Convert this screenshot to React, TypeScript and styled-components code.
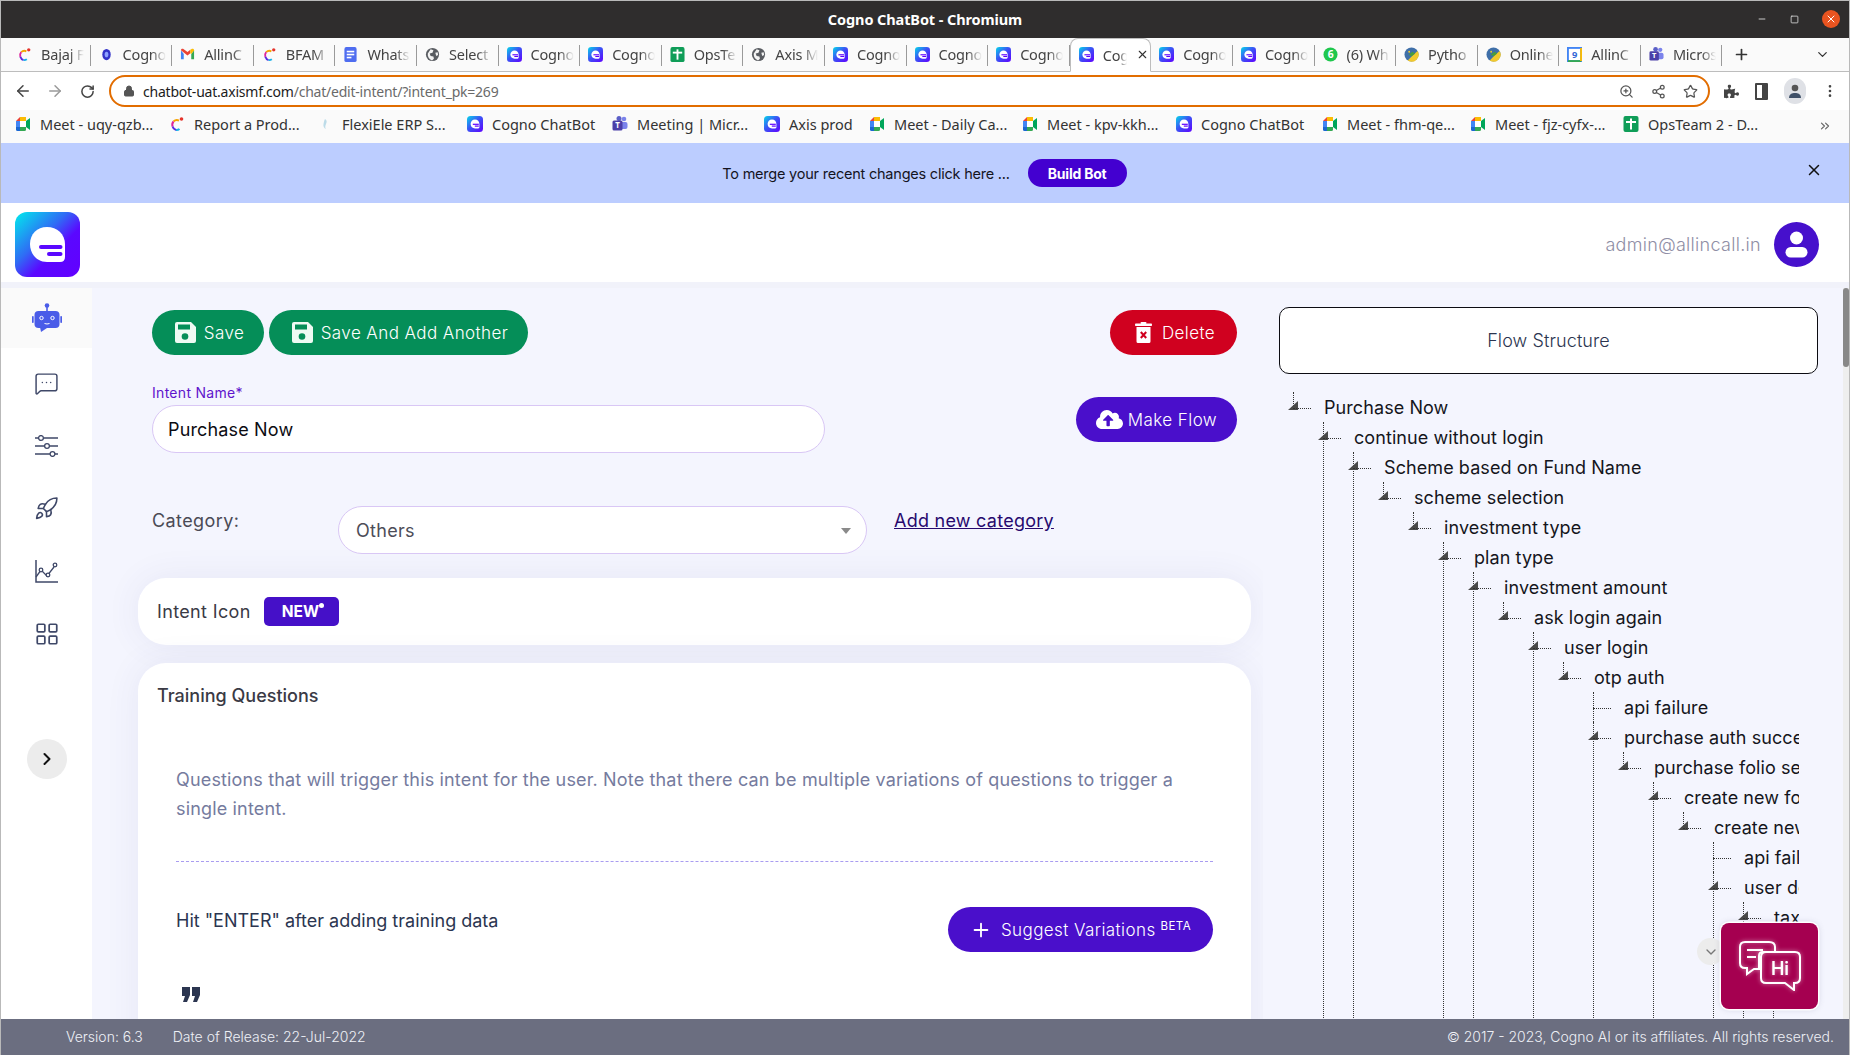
import React, { useId } from "react";
import styled, { createGlobalStyle } from "styled-components";
import {
  ArrowLeft,
  ArrowRight,
  ChevronDown,
  ChevronRight,
  ChevronsRight,
  LayoutGrid,
  Lock,
  MessageSquareMore,
  Minus,
  MoreVertical,
  Plus,
  RotateCw,
  Rocket,
  Share2,
  Square,
  Star,
  X,
  ZoomIn,
} from "lucide-react";
import { FaCloudUploadAlt, FaPuzzlePiece } from "react-icons/fa";

type IconKind =
  | "bajaj"
  | "orb"
  | "gmail"
  | "docs"
  | "globe"
  | "cogno"
  | "sheets"
  | "whatsapp"
  | "python"
  | "calendar"
  | "teams"
  | "meet"
  | "flexi";

type TreeNode = { label: string; open?: boolean; more?: boolean; children?: TreeNode[] };

const TABS: { kind: IconKind; label: string; active?: boolean }[] = [
  { kind: "bajaj", label: "Bajaj F" },
  { kind: "orb", label: "Cogno" },
  { kind: "gmail", label: "AllinC" },
  { kind: "bajaj", label: "BFAM" },
  { kind: "docs", label: "Whats" },
  { kind: "globe", label: "Select" },
  { kind: "cogno", label: "Cogno" },
  { kind: "cogno", label: "Cogno" },
  { kind: "sheets", label: "OpsTe" },
  { kind: "globe", label: "Axis M" },
  { kind: "cogno", label: "Cogno" },
  { kind: "cogno", label: "Cogno" },
  { kind: "cogno", label: "Cogno" },
  { kind: "cogno", label: "Cog", active: true },
  { kind: "cogno", label: "Cogno" },
  { kind: "cogno", label: "Cogno" },
  { kind: "whatsapp", label: "(6) Wh" },
  { kind: "python", label: "Pytho" },
  { kind: "python", label: "Online" },
  { kind: "calendar", label: "AllinC" },
  { kind: "teams", label: "Micros" },
];

const BOOKMARKS: { kind: IconKind; label: string; width: number }[] = [
  { kind: "meet", label: "Meet - uqy-qzb...", width: 154 },
  { kind: "bajaj", label: "Report a Prod...", width: 148 },
  { kind: "flexi", label: "FlexiEle ERP S...", width: 150 },
  { kind: "cogno", label: "Cogno ChatBot", width: 145 },
  { kind: "teams", label: "Meeting | Micr...", width: 152 },
  { kind: "cogno", label: "Axis prod", width: 105 },
  { kind: "meet", label: "Meet - Daily Ca...", width: 153 },
  { kind: "meet", label: "Meet - kpv-kkh...", width: 154 },
  { kind: "cogno", label: "Cogno ChatBot", width: 146 },
  { kind: "meet", label: "Meet - fhm-qe...", width: 148 },
  { kind: "meet", label: "Meet - fjz-cyfx-...", width: 153 },
  { kind: "sheets", label: "OpsTeam 2 - D...", width: 160 },
];

const chain = (nodes: TreeNode[]): TreeNode => {
  const [first, ...rest] = nodes;
  return rest.length ? { ...first, open: true, children: [chain(rest)] } : first;
};

const FLOW: TreeNode = chain([
  { label: "Purchase Now" },
  { label: "continue without login", more: true },
  { label: "Scheme based on Fund Name", more: true },
  { label: "scheme selection" },
  { label: "investment type" },
  { label: "plan type", more: true },
  { label: "investment amount", more: true },
  { label: "ask login again" },
  { label: "user login", more: true },
  {
    label: "otp auth",
    open: true,
    children: [
      { label: "api failure", more: true },
      {
        label: "purchase auth success",
        open: true,
        more: true,
        children: [
          chain([
            { label: "purchase folio selection" },
            { label: "create new folio", more: true },
            { label: "create new folio" },
          ]),
        ],
      },
    ],
  },
]);

// the deepest branch of the chart sits under "create new folio"
const addLeaves = (node: TreeNode): TreeNode => {
  if (node.label === "create new folio" && !node.more) {
    return {
      ...node,
      open: true,
      children: [
        { label: "api failure", more: true },
        {
          label: "user details",
          open: true,
          children: [
            { label: "tax status", open: true, more: true, children: [{ label: "", more: true }] },
          ],
        },
      ],
    };
  }
  return node.children ? { ...node, children: node.children.map(addLeaves) } : node;
};

const GlobalStyle = createGlobalStyle`
  html, body {
    margin: 0;
    padding: 0;
    overflow: hidden;
  }
  * {
    box-sizing: border-box;
  }
  body {
    font-family: Inter, "Open Sans", sans-serif;
  }
`;

const Window = styled.div`
  position: relative;
  width: 1850px;
  height: 1055px;
  display: flex;
  flex-direction: column;
  overflow: hidden;
  background: #fff;
  border-left: 1px solid #b9b9b9;
  border-right: 1px solid #b9b9b9;
  border-top: 1px solid #b9b9b9;
`;

const TitleBar = styled.div`
  position: relative;
  height: 37px;
  flex: none;
  display: flex;
  align-items: center;
  justify-content: center;
  padding-bottom: 1px;
  background: #2f2d2d;
  color: #fff;
  font: 700 14.5px "Noto Sans", sans-serif;
  letter-spacing: -0.1px;
`;

const WindowControls = styled.div`
  position: absolute;
  right: 9px;
  top: 9px;
  display: flex;
  align-items: center;
  gap: 23px;
  color: #e8e8e8;
`;

const CloseDot = styled.div`
  width: 18px;
  height: 18px;
  border-radius: 50%;
  background: #e95420;
  color: #fff;
  display: flex;
  align-items: center;
  justify-content: center;
`;

const TabStrip = styled.div`
  height: 34px;
  flex: none;
  display: flex;
  align-items: flex-end;
  padding-left: 8px;
  background: #fafafa;
  border-bottom: 1px solid #bdbdbd;
  color: #444;
`;

const Tab = styled.div<{ $active?: boolean }>`
  position: relative;
  width: 81.6px;
  height: ${(p) => (p.$active ? "34px" : "33px")};
  margin-bottom: ${(p) => (p.$active ? "-1px" : "0")};
  padding: 0 0 1px 8px;
  display: flex;
  align-items: center;
  gap: 9px;
  font: 400 14.5px "Noto Sans", sans-serif;
  letter-spacing: -0.2px;
  background: ${(p) => (p.$active ? "#fff" : "transparent")};
  border: ${(p) => (p.$active ? "1px solid #bdbdbd" : "none")};
  border-bottom: ${(p) => (p.$active ? "1px solid #fff" : "none")};
  border-radius: 8px 8px 0 0;

  &::after {
    content: "";
    display: ${(p) => (p.$active ? "none" : "block")};
    position: absolute;
    right: 0;
    top: 7px;
    height: 21px;
    border-right: 1px solid #9a9a9a;
  }
`;

const TabLabel = styled.span<{ $short?: boolean }>`
  width: ${(p) => (p.$short ? "24px" : "43px")};
  overflow: hidden;
  white-space: nowrap;
  mask-image: linear-gradient(to right, #000 66%, transparent 100%);
`;

const TabActions = styled.div`
  flex: 1;
  display: flex;
  align-items: center;
  justify-content: space-between;
  height: 33px;
  padding: 0 19px 0 11px;
  color: #333;
`;

const Toolbar = styled.div`
  height: 38px;
  flex: none;
  display: flex;
  align-items: center;
  padding-left: 6px;
  background: #fff;
  color: #555;
`;

const NavButton = styled.div<{ $dim?: boolean }>`
  width: 32px;
  display: flex;
  justify-content: center;
  color: ${(p) => (p.$dim ? "#9a9a9a" : "#444")};
`;

const Omnibox = styled.div`
  margin-left: 6px;
  width: 1601px;
  height: 32px;
  flex: none;
  display: flex;
  align-items: center;
  padding: 0 10px 0 12px;
  border: 2px solid #e26d00;
  border-radius: 16px;
  color: #555;
`;

const Url = styled.div`
  flex: 1;
  margin-left: 8px;
  font: 400 14px "Noto Sans", sans-serif;
  letter-spacing: -0.22px;
  color: #6a6a6a;

  b {
    font-weight: 400;
    color: #1c1c1c;
  }
`;

const OmniIcons = styled.div`
  display: flex;
  align-items: center;
  gap: 17px;
`;

const ToolIcons = styled.div`
  margin-left: 14px;
  display: flex;
  align-items: center;
  gap: 16px;
  color: #444;
`;

const PanelIcon = styled.div`
  width: 13px;
  height: 17px;
  border: 2px solid #444;
  border-right-width: 6px;
  border-radius: 1px;
`;

const Avatar = styled.div`
  width: 22px;
  height: 26px;
  border-radius: 11px;
  background: #dfe1e6;
  display: flex;
  align-items: center;
  justify-content: center;
`;

const BookmarkBar = styled.div`
  position: relative;
  height: 33px;
  flex: none;
  display: flex;
  align-items: center;
  padding: 0 0 6px 7px;
  background: #fafafa;
  color: #333;
  font: 400 14.5px "Noto Sans", sans-serif;
`;

const Bookmark = styled.div<{ $width: number }>`
  width: ${(p) => p.$width}px;
  flex: none;
  display: flex;
  align-items: center;
  gap: 9px;
  padding-left: 7px;
  white-space: nowrap;
`;

const BookmarkMore = styled.div`
  position: absolute;
  right: 17px;
  top: 7px;
  color: #666;
`;

const Banner = styled.div`
  position: relative;
  height: 60px;
  flex: none;
  display: flex;
  align-items: center;
  justify-content: center;
  gap: 18px;
  padding-right: 1px;
  background: #bccdff;
  color: #14141e;
  font-size: 14.5px;
  letter-spacing: -0.22px;
`;

const BuildButton = styled.div`
  width: 99px;
  height: 28px;
  border-radius: 14px;
  display: flex;
  align-items: center;
  justify-content: center;
  background: #4300d0;
  color: #fff;
  font-size: 14px;
  font-weight: 700;
`;

const BannerClose = styled.div`
  position: absolute;
  right: 26px;
  top: 18px;
  color: #111;
`;

const AppHeader = styled.header`
  height: 85px;
  flex: none;
  display: flex;
  align-items: center;
  justify-content: space-between;
  padding: 4px 30px 0 14px;
  background: #fff;
  border-bottom: 6px solid #f1f2fa;
`;

const UserBox = styled.div`
  display: flex;
  align-items: center;
  gap: 13px;
  color: #8f8ea5;
  font-size: 18px;
  font-weight: 300;
  letter-spacing: 0.3px;
`;

const UserAvatar = styled.div`
  width: 45px;
  height: 45px;
  border-radius: 50%;
  background: #4610cc;
  display: flex;
  align-items: center;
  justify-content: center;
`;

const Body = styled.div`
  flex: 1;
  min-height: 0;
  display: flex;
`;

const Sidebar = styled.nav`
  width: 91px;
  flex: none;
  display: flex;
  flex-direction: column;
  align-items: center;
  background: #fff;
  color: #3f4868;
`;

const NavItem = styled.div<{ $active?: boolean }>`
  width: 100%;
  height: ${(p) => (p.$active ? "60px" : "62.7px")};
  margin-bottom: ${(p) => (p.$active ? "4px" : "0")};
  flex: none;
  display: flex;
  align-items: center;
  justify-content: center;
  background: ${(p) => (p.$active ? "#fafafa" : "transparent")};
`;

const SidebarToggle = styled.div`
  margin-top: 73.5px;
  width: 40px;
  height: 40px;
  border-radius: 50%;
  background: #ececec;
  color: #111;
  display: flex;
  align-items: center;
  justify-content: center;
`;

const Content = styled.main`
  width: 1171px;
  flex: none;
  padding: 22px 0 0 46px;
  background: #f4f5fe;
  overflow: hidden;
`;

const FormBlock = styled.div`
  width: 1113px;
  padding: 0 14px;
`;

const ActionRow = styled.div`
  display: flex;
  gap: 5px;
`;

const Pill = styled.div<{ $bg: string; $width: number; $gap?: number }>`
  width: ${(p) => p.$width}px;
  height: 45px;
  flex: none;
  border-radius: 23px;
  display: flex;
  align-items: center;
  justify-content: center;
  gap: ${(p) => p.$gap ?? 9}px;
  background: ${(p) => p.$bg};
  color: #fff;
  font-size: 17px;
  font-weight: 300;
  letter-spacing: 0.42px;
  white-space: nowrap;
`;

const ActionPill = styled(Pill)`
  padding-left: 3px;
`;

const PushRight = styled.div`
  margin-left: auto;
`;

const NameRow = styled.div`
  margin-top: 29px;
  display: flex;
  justify-content: space-between;
`;

const FieldLabel = styled.label`
  display: block;
  height: 21px;
  line-height: 18px;
  color: #5f14cc;
  font-size: 14px;
  font-weight: 400;
  letter-spacing: 0.3px;
`;

const TextInput = styled.div`
  width: 673px;
  height: 48px;
  padding-left: 15px;
  display: flex;
  align-items: center;
  border: 1px solid #d9c7f5;
  border-radius: 24px;
  background: #fff;
  color: #0c0c12;
  font-size: 18px;
  letter-spacing: 0.15px;
`;

const FlowButtonWrap = styled.div`
  margin-top: 13px;
`;

const CategoryRow = styled.div`
  margin-top: 53px;
  display: flex;
  align-items: flex-start;
`;

const CategoryLabel = styled.div`
  width: 186px;
  line-height: 30px;
  color: #4a4a55;
  font-size: 18px;
  font-weight: 400;
  letter-spacing: 0.4px;
`;

const SelectBox = styled.div`
  width: 529px;
  height: 48px;
  padding: 0 15px 0 17px;
  display: flex;
  align-items: center;
  justify-content: space-between;
  border: 1px solid #d9c7f5;
  border-radius: 24px;
  background: #fff;
  color: #4d4d58;
  font-size: 18px;
  font-weight: 400;
  letter-spacing: 0.3px;
`;

const Caret = styled.span`
  width: 0;
  height: 0;
  margin-top: 2px;
  border-left: 5px solid transparent;
  border-right: 5px solid transparent;
  border-top: 6px solid #8a8a8a;
`;

const CategoryLink = styled.a`
  margin-left: 27px;
  line-height: 30px;
  color: #27096e;
  font-size: 18px;
  font-weight: 400;
  letter-spacing: 0.25px;
  text-decoration: underline;
`;

const Card = styled.section`
  width: 1113px;
  background: #fff;
  border-radius: 28px;
  box-shadow: 0 0 34px rgba(60, 60, 140, 0.08);
`;

const IconCard = styled(Card)`
  margin-top: 24px;
  height: 67px;
  padding-left: 19px;
  display: flex;
  align-items: center;
  gap: 13px;
  color: #3a3a45;
  font-size: 18px;
  font-weight: 400;
  letter-spacing: 0.35px;
`;

const NewBadge = styled.div`
  position: relative;
  width: 75px;
  height: 29px;
  border-radius: 5px;
  padding-left: 18px;
  display: flex;
  align-items: center;
  background: #4510c8;
  color: #fff;
  font-size: 15.5px;
  font-weight: 700;
  letter-spacing: 0;

  &::after {
    content: "";
    position: absolute;
    left: 55px;
    top: 6px;
    width: 5px;
    height: 5px;
    border-radius: 50%;
    background: #fff;
  }
`;

const TrainingCard = styled(Card)`
  margin-top: 18px;
  height: 500px;
  padding: 20px 38px 0 19px;
`;

const CardTitle = styled.h2`
  margin: 0;
  line-height: 26px;
  color: #3a3a45;
  font-size: 18px;
  font-weight: 500;
`;

const TrainingBody = styled.div`
  padding-left: 19px;
`;

const Hint = styled.p`
  margin: 56px 0 0;
  line-height: 29px;
  color: #757b9e;
  font-size: 18px;
  font-weight: 400;
  letter-spacing: 0.16px;
  white-space: nowrap;
`;

const Divider = styled.hr`
  margin: 38px 0 0;
  border: none;
  border-top: 1px dashed #a99cf0;
`;

const EnterRow = styled.div`
  margin-top: 45px;
  display: flex;
  align-items: flex-start;
  justify-content: space-between;
  color: #2b3550;
  font-size: 18px;
  font-weight: 400;
  line-height: 28px;
`;

const Beta = styled.sup`
  margin-left: 5px;
  font-size: 11.5px;
  font-weight: 400;
  line-height: 0;
  vertical-align: 6px;
`;

const QuoteMark = styled.svg`
  display: block;
  margin: 35px 0 0 6px;
`;

const FlowPane = styled.aside`
  width: 580px;
  flex: none;
  display: flex;
  flex-direction: column;
  padding: 19px 0 0 16px;
  background: #f4f5fe;
`;

const FlowTitle = styled.div`
  width: 539px;
  height: 67px;
  flex: none;
  border: 1px solid #0c0c12;
  border-radius: 10px;
  background: #fff;
  display: flex;
  align-items: center;
  justify-content: center;
  color: #2b3550;
  font-size: 18px;
  font-weight: 300;
  letter-spacing: 0.1px;
`;

const Tree = styled.div`
  margin-top: 18px;
  width: 520px;
  flex: 1;
  min-height: 0;
  padding-left: 14px;
  overflow: hidden;
`;

const TreeList = styled.ul<{ $root?: boolean }>`
  list-style: none;
  margin: 0;
  padding: 0 0 0 ${(p) => (p.$root ? 0 : 30)}px;
`;

const TreeItem = styled.li`
  position: relative;
`;

const TreeRun = styled.span`
  position: absolute;
  left: 0;
  top: 0;
  height: 2000px;
  border-left: 1px dotted #333;
`;

const TreeRow = styled.div`
  position: relative;
  height: 30px;
  padding-left: 31px;
  line-height: 32px;
  color: #15151c;
  font-size: 18px;
  font-weight: 400;
  letter-spacing: 0.08px;
  white-space: nowrap;

  &::before {
    content: "";
    position: absolute;
    left: 0;
    top: 0;
    height: 16px;
    border-left: 1px dotted #333;
  }

  &::after {
    content: "";
    position: absolute;
    left: 0;
    top: 16px;
    width: 18px;
    border-top: 1px dotted #333;
  }
`;

const TreeToggle = styled.span`
  position: absolute;
  left: -5px;
  top: 9px;
  width: 10px;
  height: 9px;
  background: #4a4a4a;
  clip-path: polygon(100% 0, 100% 100%, 0 100%);
`;

const Scrollbar = styled.div`
  width: 6px;
  flex: none;
  background: #eeeeee;
`;

const ScrollThumb = styled.div`
  height: 79px;
  border-radius: 3px;
  background: #888;
`;

const Footer = styled.footer`
  height: 36px;
  flex: none;
  display: flex;
  align-items: center;
  padding: 0 15px 2px 65px;
  background: #6b6e80;
  color: #eef0f6;
  font-size: 14px;
  font-weight: 300;
`;

const FooterDate = styled.span`
  margin-left: 30px;
`;

const FooterRight = styled.span`
  margin-left: auto;
`;

const ChatWidget = styled.div`
  position: absolute;
  left: 1720px;
  top: 922px;
  width: 97px;
  height: 86px;
  border-radius: 8px;
  background: #a50050;
  box-shadow: 0 0 0 1.5px #fff, 0 0 6px rgba(80, 80, 120, 0.25);
  display: flex;
  align-items: center;
  justify-content: center;

  svg {
    filter: drop-shadow(0 0 2px rgba(255, 255, 255, 0.55));
  }
`;

const ChatCollapse = styled.div`
  position: absolute;
  left: 1696px;
  top: 937px;
  width: 27px;
  height: 27px;
  border-radius: 50%;
  background: #ececec;
  color: #777;
  display: flex;
  align-items: center;
  justify-content: center;
`;

function Favicon({ kind, size = 16 }: { kind: IconKind; size?: number }) {
  const id = useId();
  const shell = (children: React.ReactNode) => (
    <svg width={size} height={size} viewBox="0 0 16 16" style={{ flex: "none" }}>
      {children}
    </svg>
  );
  switch (kind) {
    case "cogno":
      return shell(
        <>
          <defs>
            <linearGradient id={id} x1="0" y1="0" x2="1" y2="1">
              <stop offset="0" stopColor="#05d8ea" />
              <stop offset="0.45" stopColor="#3a55f5" />
              <stop offset="1" stopColor="#5f00ff" />
            </linearGradient>
          </defs>
          <rect width="16" height="16" rx="3.5" fill={`url(#${id})`} />
          <path d="M8 3.6c2.6 0 4.4 1.9 4.4 4.4v3.2c0 .7-.5 1.2-1.2 1.2H8C5.5 12.4 3.6 10.500 3.6 8S5.500 3.600 8 3.600z" fill="#fff" />
          <rect x="5.800" y="7.700" width="6" height="1.200" fill="#5f00ff" />
          <rect x="7.800" y="9.500" width="4" height="1.200" fill="#5f00ff" />
        </>
      );
    case "bajaj":
      return shell(
        <>
          <path d="M10 4.600A5 5 0 0 0 4.500 5.500" fill="none" stroke="#f5a400" strokeWidth="2" />
          <path d="M4.500 5.500A5 5 0 0 0 3.600 10.500" fill="none" stroke="#e0249a" strokeWidth="2" />
          <path d="M3.600 10.500A5 5 0 0 0 7 14" fill="none" stroke="#5a2be0" strokeWidth="2" />
          <path d="M7 14A5 5 0 0 0 10.500 13" fill="none" stroke="#14b0e8" strokeWidth="2" />
          <circle cx="12.500" cy="3" r="1.800" fill="#e5342b" />
        </>
      );
    case "orb":
      return shell(
        <>
          <ellipse cx="8" cy="8" rx="4.500" ry="6" fill="#3333c8" />
          <ellipse cx="8" cy="8" rx="2" ry="3" fill="#8ea2ff" />
        </>
      );
    case "gmail":
      return shell(
        <>
          <path d="M1 3.500V13h3V7.500z" fill="#4285f4" />
          <path d="M15 3.500V13h-3V7.500z" fill="#34a853" />
          <path d="M1 3.500L8 9l3-2.400V2.800L8 5.200 4 2.300C2.500 1.500 1 2 1 3.500z" fill="#ea4335" />
          <path d="M12 7.500l3-4c0-1.500-1.500-2-3-1.200l-1 .6v3.700z" fill="#fbbc04" />
        </>
      );
    case "docs":
      return shell(
        <>
          <rect x="1.500" width="13" height="16" rx="2" fill="#4f6df0" />
          <rect x="4" y="4" width="8" height="1.700" fill="#fff" />
          <rect x="4" y="7.200" width="8" height="1.700" fill="#fff" />
          <rect x="4" y="10.400" width="5" height="1.700" fill="#fff" />
        </>
      );
    case "globe":
      return shell(
        <>
          <circle cx="8" cy="8" r="7" fill="#5a5d62" />
          <path d="M6 2.500l3 1-1 2.500-3 1 1 2.500 3 .5.500 2.500-2 2C4 13 2.500 10 3 7zM11 6l2.500-.5.500 3-2 1z" fill="#f4f4f4" />
        </>
      );
    case "sheets":
      return shell(
        <>
          <rect x="0.500" width="15" height="16" rx="2" fill="#0f9d58" />
          <rect x="7" y="2.500" width="2" height="11" fill="#fff" />
          <rect x="3" y="5" width="10" height="2" fill="#fff" />
        </>
      );
    case "whatsapp":
      return shell(
        <>
          <circle cx="8" cy="8" r="7.500" fill="#1fc74d" />
          <text x="8" y="12" textAnchor="middle" fontSize="11" fontWeight="700" fill="#fff" fontFamily="Noto Sans">
            6
          </text>
        </>
      );
    case "python":
      return shell(
        <>
          <circle cx="8" cy="8" r="7.500" fill="#3f6fa8" />
          <path d="M14.500 4.200A7.500 7.500 0 0 1 4 14.400L9 9z" fill="#f2c92e" />
          <circle cx="5.500" cy="5" r="1" fill="#f2c92e" />
          <path d="M5 8l4-3 3 2-4 3z" fill="#4a9b3f" />
        </>
      );
    case "calendar":
      return shell(
        <>
          <rect x="1" y="1" width="14" height="14" fill="#fff" stroke="#4285f4" strokeWidth="2" />
          <path d="M1 15h14" stroke="#34a853" strokeWidth="2" />
          <path d="M15 1v14" stroke="#fbbc04" strokeWidth="2" />
          <text x="8" y="12" textAnchor="middle" fontSize="10" fontWeight="700" fill="#3367d6" fontFamily="Noto Sans">
            9
          </text>
        </>
      );
    case "teams":
      return shell(
        <>
          <circle cx="12" cy="3" r="2.300" fill="#7b83eb" />
          <circle cx="7" cy="2.500" r="2.500" fill="#5b5fc7" />
          <rect x="8" y="6" width="7.500" height="7" rx="2" fill="#7b83eb" />
          <rect x="0.500" y="4.500" width="10" height="10" rx="1.500" fill="#4b3fa8" />
          <text x="5.500" y="12" textAnchor="middle" fontSize="8" fontWeight="700" fill="#fff" fontFamily="Noto Sans">
            T
          </text>
        </>
      );
    case "meet":
      return shell(
        <>
          <path d="M1 5l4-4v4z" fill="#ea4335" />
          <rect x="5" y="1" width="6" height="4" fill="#fbbc04" />
          <rect x="1" y="5" width="4" height="6" fill="#4285f4" />
          <path d="M1 11h4v4H2.500A1.500 1.500 0 0 1 1 13.500z" fill="#1967d2" />
          <path d="M5 11h6v2.500a1.500 1.500 0 0 1-1.500 1.500H5z" fill="#34a853" />
          <path d="M11 5l4-3v12l-4-3z" fill="#00a65a" />
          <rect x="5" y="5" width="6" height="6" fill="#fff" />
        </>
      );
    case "flexi":
      return shell(
        <>
          <path d="M8 3c2 1 2 3 1 5s-1 4 0 5c-2-.500-3-3-2.500-5S7 5 8 3z" fill="#bcdbe8" />
        </>
      );
  }
}

function LogoMark() {
  const id = useId();
  return (
    <svg width="65" height="65" viewBox="0 0 65 65">
      <defs>
        <linearGradient id={id} x1="0" y1="0" x2="1" y2="1">
          <stop offset="0" stopColor="#00ecec" />
          <stop offset="0.4" stopColor="#2f6cf5" />
          <stop offset="0.62" stopColor="#5a08ff" />
          <stop offset="1" stopColor="#6200ff" />
        </linearGradient>
      </defs>
      <rect width="65" height="65" rx="12" fill={`url(#${id})`} />
      <path d="M32 15c10 0 18 7 18 17v13q0 5-5 5H32c-10 0-17-8-17-18s7-17 17-17z" fill="#fff" />
      <rect x="24" y="33" width="23.500" height="4" rx="2" fill="#5a08ff" />
      <rect x="32" y="40" width="15.500" height="4" rx="2" fill="#5a08ff" />
    </svg>
  );
}

function BotIcon() {
  return (
    <svg width="30" height="30" viewBox="0 0 30 30">
      <circle cx="15" cy="2.500" r="2.300" fill="#4a5ce8" />
      <rect x="14.200" y="3" width="1.600" height="6" fill="#4a5ce8" />
      <rect x="2.500" y="8" width="25" height="17" rx="4" fill="#4a5ce8" />
      <path d="M8 24l1 5 6-4z" fill="#4a5ce8" />
      <rect x="0" y="13" width="1.700" height="7" rx="0.800" fill="#4a5ce8" />
      <rect x="28.300" y="13" width="1.700" height="7" rx="0.800" fill="#4a5ce8" />
      <circle cx="9.500" cy="15" r="1.700" fill="none" stroke="#fff" strokeWidth="1" />
      <circle cx="20.500" cy="15" r="1.700" fill="none" stroke="#fff" strokeWidth="1" />
      <path d="M12.500 20.500q2.500 1 5 0" fill="none" stroke="#fff" strokeWidth="1" />
    </svg>
  );
}

function SlidersIcon() {
  return (
    <svg width="23" height="22" viewBox="0 0 23 22" fill="none" stroke="#3f4868" strokeWidth="1.300">
      <path d="M0 3h3.500M8.500 3H23M0 11h9.500M14.500 11H23M0 19h15M20 19h3" />
      <circle cx="6" cy="3" r="2.400" />
      <circle cx="12" cy="11" r="2.400" />
      <circle cx="17.500" cy="19" r="2.400" />
    </svg>
  );
}

function ChartIcon() {
  return (
    <svg width="23" height="23" viewBox="0 0 23 23" fill="none" stroke="#3f4868" strokeWidth="1.300">
      <path d="M1 0v22h22" strokeWidth="1.500" />
      <path d="M1 17l5-7 6 6 7-9" />
      <circle cx="6" cy="10" r="1.800" fill="#fff" />
      <circle cx="13" cy="15" r="1.800" fill="#fff" />
      <circle cx="20" cy="5" r="1.800" fill="#fff" />
    </svg>
  );
}

function SaveIcon() {
  return (
    <svg width="21" height="21" viewBox="0 0 21 21">
      <path d="M2 0h14l5 5v14a2 2 0 0 1-2 2H2a2 2 0 0 1-2-2V2a2 2 0 0 1 2-2z" fill="#eefaf3" />
      <rect x="3" y="2.500" width="12" height="5" fill="#058e58" />
      <circle cx="10" cy="14.500" r="3.300" fill="#058e58" />
    </svg>
  );
}

function TrashIcon() {
  return (
    <svg width="17" height="21" viewBox="0 0 17 21">
      <rect x="5.500" y="0" width="6" height="2" rx="1" fill="#fff" />
      <rect x="0" y="1.500" width="17" height="2.500" rx="0.800" fill="#fff" />
      <path d="M1.500 5h14v14.500a1.500 1.500 0 0 1-1.500 1.500H3a1.500 1.500 0 0 1-1.500-1.500z" fill="#fff" />
      <path d="M5.800 10l5.400 6M11.200 10l-5.400 6" stroke="#d0011f" strokeWidth="2" />
    </svg>
  );
}

function ChatBubbles() {
  return (
    <svg width="62" height="50" viewBox="0 0 62 50" fill="none" stroke="#fff" strokeWidth="2">
      <path d="M6 1h24q6 0 6 5v5H24q-4 0-4 4v13h-5l-7 5v-6H6q-5 0-5-5V6q0-5 5-5z" />
      <path d="M8 9h16M8 16h9" />
      <path d="M27 11h29q5 0 5 5v21q0 5-5 5h-1v7l-9-7H27q-5 0-5-5V16q0-5 5-5z" />
      <text x="41" y="34" textAnchor="middle" fontFamily="Inter" fontSize="18" fontWeight="600" fill="#fff" stroke="none">
        Hi
      </text>
    </svg>
  );
}

function FlowItem({ node }: { node: TreeNode }) {
  return (
    <TreeItem>
      {node.more && <TreeRun />}
      <TreeRow>
        {node.open && <TreeToggle />}
        {node.label}
      </TreeRow>
      {node.children && (
        <TreeList>
          {node.children.map((child, i) => (
            <FlowItem key={i} node={child} />
          ))}
        </TreeList>
      )}
    </TreeItem>
  );
}

export default function App() {
  return (
    <Window>
      <GlobalStyle />
      <TitleBar>
        Cogno ChatBot - Chromium
        <WindowControls>
          <Minus size={10} />
          <Square size={9} />
          <CloseDot>
            <X size={12} />
          </CloseDot>
        </WindowControls>
      </TitleBar>

      <TabStrip>
        {TABS.map((tab, i) => (
          <Tab key={i} $active={tab.active}>
            <Favicon kind={tab.kind} size={15} />
            <TabLabel $short={tab.active}>{tab.label}</TabLabel>
            {tab.active && <X size={13} color="#333" />}
          </Tab>
        ))}
        <TabActions>
          <Plus size={17} strokeWidth={2.4} />
          <ChevronDown size={15} />
        </TabActions>
      </TabStrip>

      <Toolbar>
        <NavButton>
          <ArrowLeft size={18} />
        </NavButton>
        <NavButton $dim>
          <ArrowRight size={18} />
        </NavButton>
        <NavButton>
          <RotateCw size={15} strokeWidth={2.4} />
        </NavButton>
        <Omnibox>
          <Lock size={12} fill="#555" />
          <Url>
            <b>chatbot-uat.axismf.com</b>/chat/edit-intent/?intent_pk=269
          </Url>
          <OmniIcons>
            <ZoomIn size={15} />
            <Share2 size={15} />
            <Star size={15} />
          </OmniIcons>
        </Omnibox>
        <ToolIcons>
          <FaPuzzlePiece size={15} />
          <PanelIcon />
          <Avatar>
            <svg width="14" height="16" viewBox="0 0 14 16">
              <circle cx="7" cy="5" r="3.300" fill="#555" />
              <path d="M1 15c0-4 3-5 6-5s6 1 6 5z" fill="#3f5068" />
            </svg>
          </Avatar>
          <MoreVertical size={16} />
        </ToolIcons>
      </Toolbar>

      <BookmarkBar>
        {BOOKMARKS.map((b, i) => (
          <Bookmark key={i} $width={b.width}>
            <Favicon kind={b.kind} />
            {b.label}
          </Bookmark>
        ))}
        <BookmarkMore>
          <ChevronsRight size={14} />
        </BookmarkMore>
      </BookmarkBar>

      <Banner>
        To merge your recent changes click here ...
        <BuildButton>Build Bot</BuildButton>
        <BannerClose>
          <X size={18} />
        </BannerClose>
      </Banner>

      <AppHeader>
        <LogoMark />
        <UserBox>
          admin@allincall.in
          <UserAvatar>
            <svg width="23" height="27" viewBox="0 0 23 27" fill="#fff">
              <circle cx="11.500" cy="7" r="6.500" />
              <rect x="0.500" y="16" width="22" height="10.500" rx="5.200" />
            </svg>
          </UserAvatar>
        </UserBox>
      </AppHeader>

      <Body>
        <Sidebar>
          <NavItem $active>
            <BotIcon />
          </NavItem>
          <NavItem>
            <MessageSquareMore size={25} strokeWidth={1.4} />
          </NavItem>
          <NavItem>
            <SlidersIcon />
          </NavItem>
          <NavItem>
            <Rocket size={25} strokeWidth={1.5} />
          </NavItem>
          <NavItem>
            <ChartIcon />
          </NavItem>
          <NavItem>
            <LayoutGrid size={26} strokeWidth={1.6} />
          </NavItem>
          <SidebarToggle>
            <ChevronRight size={20} strokeWidth={2.4} />
          </SidebarToggle>
        </Sidebar>

        <Content>
          <FormBlock>
            <ActionRow>
              <ActionPill $bg="#058e58" $width={112} $gap={8}>
                <SaveIcon />
                Save
              </ActionPill>
              <ActionPill $bg="#058e58" $width={259} $gap={8}>
                <SaveIcon />
                Save And Add Another
              </ActionPill>
              <PushRight>
                <ActionPill $bg="#d0011f" $width={127} $gap={10}>
                  <TrashIcon />
                  Delete
                </ActionPill>
              </PushRight>
            </ActionRow>

            <NameRow>
              <div>
                <FieldLabel>Intent Name*</FieldLabel>
                <TextInput>Purchase Now</TextInput>
              </div>
              <FlowButtonWrap>
                <Pill $bg="#4a0fcb" $width={161} $gap={5}>
                  <FaCloudUploadAlt size={27} />
                  Make Flow
                </Pill>
              </FlowButtonWrap>
            </NameRow>

            <CategoryRow>
              <CategoryLabel>Category:</CategoryLabel>
              <SelectBox>
                Others
                <Caret />
              </SelectBox>
              <CategoryLink>Add new category</CategoryLink>
            </CategoryRow>
          </FormBlock>

          <IconCard>
            Intent Icon
            <NewBadge>NEW</NewBadge>
          </IconCard>

          <TrainingCard>
            <CardTitle>Training Questions</CardTitle>
            <TrainingBody>
              <Hint>
                Questions that will trigger this intent for the user. Note that there can be multiple variations of
                questions to trigger a
                <br />
                single intent.
              </Hint>
              <Divider />
              <EnterRow>
                Hit "ENTER" after adding training data
                <Pill $bg="#4a0fcb" $width={265}>
                  <Plus size={22} strokeWidth={2} />
                  <span>
                    Suggest Variations<Beta>BETA</Beta>
                  </span>
                </Pill>
              </EnterRow>
              <QuoteMark width="18" height="15" viewBox="0 0 18 15" fill="#2b3550">
                <path d="M0 0h8v8l-3 7H1l2-6H0zM10 0h8v8l-3 7h-4l2-6h-3z" />
              </QuoteMark>
            </TrainingBody>
          </TrainingCard>
        </Content>

        <FlowPane>
          <FlowTitle>Flow Structure</FlowTitle>
          <Tree>
            <TreeList $root>
              <FlowItem node={addLeaves(FLOW)} />
            </TreeList>
          </Tree>
        </FlowPane>

        <Scrollbar>
          <ScrollThumb />
        </Scrollbar>
      </Body>

      <Footer>
        Version: 6.3
        <FooterDate>Date of Release: 22-Jul-2022</FooterDate>
        <FooterRight>© 2017 - 2023, Cogno AI or its affiliates. All rights reserved.</FooterRight>
      </Footer>

      <ChatCollapse>
        <ChevronDown size={16} />
      </ChatCollapse>
      <ChatWidget>
        <ChatBubbles />
      </ChatWidget>
    </Window>
  );
}
